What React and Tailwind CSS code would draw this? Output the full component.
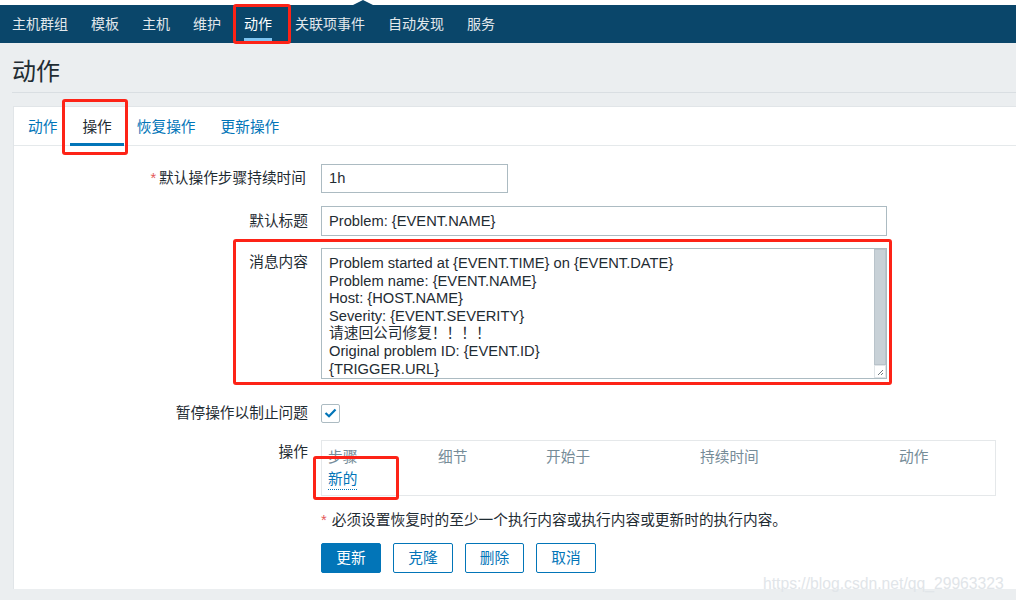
import React from "react";

const FONT = { fontFamily: '"Liberation Sans", "Noto Sans CJK SC", sans-serif' };

const navItems = ["主机群组", "模板", "主机", "维护", "动作", "关联项事件", "自动发现", "服务"];
const tabs = ["动作", "操作", "恢复操作", "更新操作"];
const messageLines = [
  "Problem started at {EVENT.TIME} on {EVENT.DATE}",
  "Problem name: {EVENT.NAME}",
  "Host: {HOST.NAME}",
  "Severity: {EVENT.SEVERITY}",
  "请速回公司修复！！！！",
  "Original problem ID: {EVENT.ID}",
  "{TRIGGER.URL}",
];

const NavBar = () => (
  <div className="flex h-[38px] bg-[#0a466a]">
    {navItems.map((item) => {
      const active = item === "动作";
      return (
        <div
          key={item}
          className={`relative flex items-center px-[11.5px] first:pl-[12px] text-[14px] ${
            active ? "text-white" : "text-[#e2e8ec]"
          }`}
        >
          {item}
          {active && (
            <span className="absolute bottom-[1px] left-[11.5px] right-[11.5px] h-[4px] bg-[#7ec4f0]" />
          )}
        </div>
      );
    })}
  </div>
);

const Tabs = () => (
  <div className="flex h-[39px] pl-[1.5px] border-b border-[#e5e9eb]">
    {tabs.map((t) => {
      const active = t === "操作";
      return (
        <div
          key={t}
          className={`relative flex items-center pt-[2px] px-[12.5px] ${
            active ? "text-[#1f2c33]" : "text-[#0275b8]"
          }`}
        >
          {t}
          {active && (
            <span className="absolute bottom-[-1px] left-0 right-0 h-[3px] bg-[#0275b8]" />
          )}
        </div>
      );
    })}
  </div>
);

const Label = ({ children, className = "" }) => (
  <div className={`w-[294px] shrink-0 text-right text-[#1f2c33] ${className}`}>{children}</div>
);

const MessageBox = () => (
  <div className="relative w-[566px] h-[131px] border border-[#acbbc2] bg-white pl-[7px] pt-[6px] leading-[17.6px] text-[#1f2c33]">
    {messageLines.map((l) => (
      <div key={l}>{l}</div>
    ))}
    {/* scrollbar */}
    <div className="absolute right-0 top-0 w-[12px] h-[116px] bg-[#c8d1d7] border border-[#b9c3ca]" />
    <div className="absolute right-0 bottom-0 w-[12px] h-[13px] bg-white border border-[#e1e5e8]">
      <svg width="10" height="11" viewBox="0 0 10 11" className="absolute right-0 bottom-0">
        <path d="M3 9 L8 4 M6 9 L8 7" stroke="#707a80" strokeWidth="1" />
      </svg>
    </div>
  </div>
);

const OpsTable = () => (
  <div className="w-[675px] h-[56px] border border-[#e5e8ea] pl-[6px] pt-[8px]">
    <div className="grid grid-cols-[110px_108px_154px_199px_1fr] text-[#768c98] leading-[17.7px]">
      <div>步骤</div>
      <div>细节</div>
      <div>开始于</div>
      <div>持续时间</div>
      <div>动作</div>
    </div>
    <div className="mt-[1px]">
      <span className="inline-block leading-[19px] text-[#0275b8] border-b border-dotted border-[#0275b8]">
        新的
      </span>
    </div>
  </div>
);

const Btn = ({ children, primary, w }) => (
  <button
    className={`h-[30px] ${w} rounded-[2px] border border-[#0275b8] flex items-center justify-center ${
      primary ? "bg-[#0275b8] text-white" : "bg-white text-[#0275b8]"
    }`}
  >
    {children}
  </button>
);

const RedBox = ({ className }) => (
  <div className={`absolute border-[3px] border-[#fd2317] rounded-[3px] pointer-events-none ${className}`} />
);

export default function App() {
  return (
    <div
      style={FONT}
      className="relative w-[1016px] h-[600px] overflow-hidden bg-[#ebeef0] text-[14.7px] text-[#1f2c33]"
    >
      {/* top strip with menu arrow */}
      <div className="relative h-[5px] bg-white">
        <svg width="20" height="5" viewBox="0 0 20 5" className="absolute left-[353px] top-0">
          <path d="M0 5 L10 0 L20 5 Z" fill="#0a466a" />
        </svg>
      </div>
      <NavBar />

      <div className="ml-[12px] h-[50px] pt-[15px] border-b border-[#d9dee2]">
        <h1 className="text-[24px] leading-[28px] text-[#1f2c33]">动作</h1>
      </div>

      <div className="ml-[13px] mt-[13px] h-[483px] bg-white border-l border-t border-[#e1e5e8]">
        <Tabs />

        <div className="pt-[18px] flex flex-col">
          <div className="flex gap-[13px] items-center">
            <Label className="pr-[2px]">
              <span className="text-[#e45959] mr-[3px]">*</span>默认操作步骤持续时间
            </Label>
            <div className="w-[187px] h-[29px] border border-[#acbbc2] flex items-center pl-[7px]">1h</div>
          </div>

          <div className="flex gap-[13px] items-center mt-[13px]">
            <Label>默认标题</Label>
            <div className="w-[566px] h-[30px] border border-[#acbbc2] flex items-center pl-[7px]">
              Problem: {"{EVENT.NAME}"}
            </div>
          </div>

          <div className="flex gap-[13px] items-start mt-[12px]">
            <Label className="pt-[6px] leading-[17.7px]">消息内容</Label>
            <MessageBox />
          </div>

          <div className="flex gap-[13px] items-center mt-[23px]">
            <Label>暂停操作以制止问题</Label>
            <div className="w-[19px] h-[19px] border border-[#acbbc2] rounded-[2px] flex items-center justify-center">
              <svg width="13" height="10" viewBox="0 0 13 10">
                <path d="M1.5 5 L5 8.3 L11.5 1.5" fill="none" stroke="#0275b8" strokeWidth="2.2" />
              </svg>
            </div>
          </div>

          <div className="flex gap-[13px] items-start mt-[16px]">
            <Label className="pt-[4px] leading-[17.7px]">操作</Label>
            <OpsTable />
          </div>

          <div className="ml-[307px] mt-[16px] leading-[17.7px]">
            <span className="text-[#e45959] mr-[5px]">*</span>必须设置恢复时的至少一个执行内容或执行内容或更新时的执行内容。
          </div>

          <div className="ml-[307px] mt-[13px] flex gap-[12px]">
            <Btn primary w="w-[60px]">更新</Btn>
            <Btn w="w-[60px]">克隆</Btn>
            <Btn w="w-[59px]">删除</Btn>
            <Btn w="w-[60px]">取消</Btn>
          </div>
        </div>
      </div>

      {/* watermark */}
      <div className="absolute left-[763px] top-[572px] text-[15.7px] text-[#e1e5e9]">
        https://blog.csdn.net/qq_29963323
      </div>

      {/* annotation boxes */}
      <RedBox className="left-[233px] top-[4px] w-[58px] h-[40px]" />
      <RedBox className="left-[62px] top-[99px] w-[66px] h-[56px]" />
      <RedBox className="left-[233px] top-[239px] w-[659px] h-[146px]" />
      <RedBox className="left-[313px] top-[456px] w-[86px] h-[44px]" />
    </div>
  );
}
